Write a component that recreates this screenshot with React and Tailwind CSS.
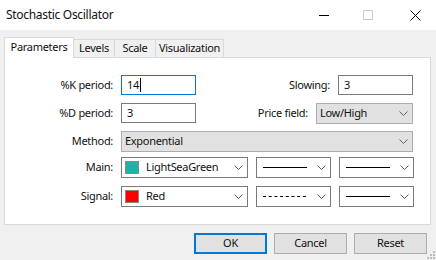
import React from "react";

const Chevron = ({ className = "" }) => (
  <svg width="9" height="5" viewBox="0 0 9 5" className={className}>
    <polyline points="0.5,0.5 4.5,4.5 8.5,0.5" fill="none" stroke="#606060" strokeWidth="1" />
  </svg>
);

const Edit = ({ value, focused, className = "" }) => (
  <div
    className={`h-[20px] bg-white border flex items-center pl-[5px] ${
      focused ? "border-[#0078d7]" : "border-[#7a7a7a]"
    } ${className}`}
  >
    <span>{value}</span>
    {focused && <span className="w-px h-[14px] bg-black ml-[1px]" />}
  </div>
);

const GraySelect = ({ value, className = "" }) => (
  <div className={`h-[21px] bg-[#e1e1e1] border border-[#adadad] flex items-center pl-[3px] pr-[4px] ${className}`}>
    <span className="flex-1">{value}</span>
    <Chevron />
  </div>
);

const WhiteSelect = ({ children, className = "" }) => (
  <div className={`h-[21px] bg-white border border-[#7a7a7a] flex items-center pr-[4px] ${className}`}>
    <div className="flex-1 flex items-center">{children}</div>
    <Chevron />
  </div>
);

const Label = ({ children, className = "" }) => (
  <span className={`text-right ${className}`}>{children}</span>
);

const LineSample = ({ dashed }) => (
  <svg width="44" height="3" viewBox="0 0 44 3" className="ml-[6px]">
    <line
      x1="0"
      y1="1.5"
      x2="44"
      y2="1.5"
      stroke="#000"
      strokeWidth="1"
      strokeDasharray={dashed ? "3 2.7" : undefined}
    />
  </svg>
);

export default function App() {
  return (
    <div
      className="w-[436px] h-[260px] bg-[#f0f0f0] relative overflow-hidden text-[11px] tracking-[-0.3px] text-[#111]"
      style={{ fontFamily: '"Noto Sans", "Open Sans", sans-serif' }}
    >
      {/* title bar */}
      <div className="h-[30px] bg-white flex items-center">
        <span className="pl-[6px] text-[12px] tracking-[-0.3px]">Stochastic Oscillator</span>
        <div className="ml-auto flex items-center h-full">
          <div className="w-[10px] h-px bg-black mr-[34px]" />
          <div className="w-[10px] h-[10px] border border-[#cccccc] mr-[37px]" />
          <svg width="11" height="11" viewBox="0 0 11 11" className="mr-[15px]">
            <line x1="0.5" y1="0.5" x2="10.5" y2="10.5" stroke="#000" strokeWidth="1" />
            <line x1="10.5" y1="0.5" x2="0.5" y2="10.5" stroke="#000" strokeWidth="1" />
          </svg>
        </div>
      </div>

      <div className="px-[4px] pt-[7px]">
        {/* tabs */}
        <div className="flex items-end h-[20px] relative z-10">
          <div className="relative h-[21px] w-[70px] mb-[-1px] bg-white border border-b-0 border-[#d9d9d9] flex items-center justify-center pb-[2px]">
            Parameters
          </div>
          <div className="h-[18px] w-[41px] border-t border-r border-[#d9d9d9] flex items-center justify-center">
            Levels
          </div>
          <div className="h-[18px] w-[41px] border-t border-r border-[#d9d9d9] flex items-center justify-center">
            Scale
          </div>
          <div className="h-[18px] w-[68px] border-t border-r border-[#d9d9d9] flex items-center justify-center">
            Visualization
          </div>
        </div>

        {/* panel */}
        <div className="w-[427px] h-[168px] bg-white border border-[#d9d9d9] flex flex-col">
          <div className="flex items-center mt-[17px] h-[20px]">
            <Label className="w-[108px]">%K period:</Label>
            <Edit value="14" focused className="ml-[8px] w-[75px]" />
            <Label className="ml-auto">Slowing:</Label>
            <Edit value="3" className="ml-[8px] w-[75px] mr-[17px]" />
          </div>
          <div className="flex items-center mt-[8px] h-[20px]">
            <Label className="w-[108px]">%D period:</Label>
            <Edit value="3" className="ml-[8px] w-[75px]" />
            <Label className="ml-auto">Price field:</Label>
            <GraySelect value="Low/High" className="ml-[8px] w-[97px] mr-[17px]" />
          </div>
          <div className="flex items-center mt-[8px] h-[21px]">
            <Label className="w-[108px]">Method:</Label>
            <GraySelect value="Exponential" className="ml-[8px] w-[292px]" />
          </div>
          <div className="flex items-center mt-[5px] h-[21px]">
            <Label className="w-[108px]">Main:</Label>
            <WhiteSelect className="ml-[8px] w-[127px]">
              <span className="ml-[3px] w-[14px] h-[13px] border border-[#888] bg-[#20b2aa]" />
              <span className="ml-[7px]">LightSeaGreen</span>
            </WhiteSelect>
            <WhiteSelect className="ml-[8px] w-[75px]">
              <LineSample />
            </WhiteSelect>
            <WhiteSelect className="ml-[8px] w-[75px]">
              <LineSample />
            </WhiteSelect>
          </div>
          <div className="flex items-center mt-[8px] h-[21px]">
            <Label className="w-[108px]">Signal:</Label>
            <WhiteSelect className="ml-[8px] w-[127px]">
              <span className="ml-[3px] w-[14px] h-[13px] border border-[#888] bg-[#ff0000]" />
              <span className="ml-[7px]">Red</span>
            </WhiteSelect>
            <WhiteSelect className="ml-[8px] w-[75px]">
              <LineSample dashed />
            </WhiteSelect>
            <WhiteSelect className="ml-[8px] w-[75px]">
              <LineSample />
            </WhiteSelect>
          </div>
        </div>

        {/* buttons */}
        <div className="flex justify-end gap-[7px] mt-[8px] pr-[5px]">
          <div className="w-[73px] h-[21px] bg-[#e1e1e1] border-2 border-[#0078d7] flex items-center justify-center">
            OK
          </div>
          <div className="w-[73px] h-[21px] bg-[#e1e1e1] border border-[#adadad] flex items-center justify-center">
            Cancel
          </div>
          <div className="w-[73px] h-[21px] bg-[#e1e1e1] border border-[#adadad] flex items-center justify-center">
            Reset
          </div>
        </div>
      </div>

      {/* resize grip */}
      <svg width="10" height="10" viewBox="0 0 10 10" className="absolute right-[1px] bottom-[1px]">
        {[
          [8, 0], [8, 3], [5, 3], [8, 6], [5, 6], [2, 6],
        ].map(([x, y], i) => (
          <rect key={i} x={x} y={y + 2} width="2" height="2" fill="#bcbcbc" />
        ))}
      </svg>
    </div>
  );
}
